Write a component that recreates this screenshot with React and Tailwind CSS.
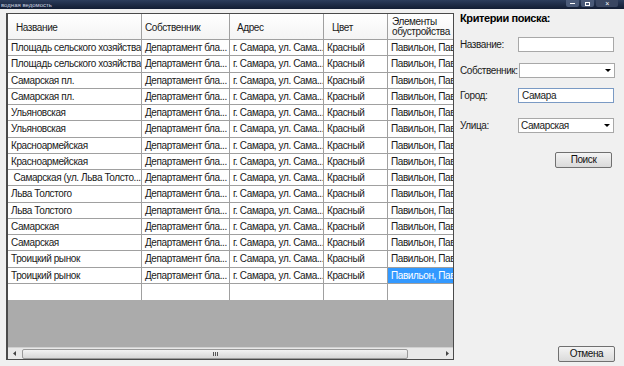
const rows = [
  'Площадь сельского хозяйства',
  'Площадь сельского хозяйства',
  'Самарская пл.',
  'Самарская пл.',
  'Ульяновская',
  'Ульяновская',
  'Красноармейская',
  'Красноармейская',
  ' Самарская (ул. Льва Толсто...',
  'Льва Толстого',
  'Льва Толстого',
  'Самарская',
  'Самарская',
  'Троицкий рынок',
  'Троицкий рынок',
]

const cols = ['w-[134px]', 'w-[88px]', 'w-[94px]', 'w-[64px]', 'w-[65px]']

function Cell({ w, children, selected, last }) {
  return (
    <div
      className={`${w} shrink-0 h-full px-[3px] flex items-center overflow-hidden whitespace-nowrap ${
        last ? '' : 'border-r border-[#a0a0a0]'
      } ${selected ? 'bg-[#3399ff] text-white' : ''}`}
    >
      {children}
    </div>
  )
}

function Select({ value }) {
  return (
    <div className="w-[96px] h-[15px] shrink-0 bg-white border border-[#a8a8a8] flex items-center justify-between pl-[2px] pr-[3px]">
      <span>{value}</span>
      <svg width="6" height="3" viewBox="0 0 6 3"><path d="M0 0h6L3 3z" fill="#000" /></svg>
    </div>
  )
}

function Button({ children }) {
  return (
    <button className="w-[57px] h-[16px] border border-[#707070] rounded-[2px] bg-gradient-to-b from-[#f4f4f4] to-[#dadada] leading-none text-[#111]">
      {children}
    </button>
  )
}

export default function App() {
  return (
    <div
      className="w-[624px] h-[366px] bg-[#f0f0f0] flex flex-col overflow-hidden text-[10px] tracking-[-0.4px] text-[#1a1a1a]"
      style={{ fontFamily: '"Liberation Sans", Arial, sans-serif' }}
    >
      {/* Title bar */}
      <div className="h-[9px] shrink-0 bg-gradient-to-b from-[#2c3d5c] to-[#121d33] flex items-center justify-between">
        <span className="text-[6px] leading-none text-[#c8d0e0] pl-[1px] tracking-normal">водная ведомость</span>
        <div className="flex gap-[2px] pr-[6px] h-full items-start">
          <div className="w-[13px] h-[7px] bg-[#4a5a78] rounded-b-[2px] flex items-center justify-center">
            <div className="w-[5px] h-[1px] bg-white" />
          </div>
          <div className="w-[13px] h-[7px] bg-[#4a5a78] rounded-b-[2px] flex items-center justify-center">
            <div className="w-[5px] h-[4px] border border-white" />
          </div>
          <div className="w-[22px] h-[7px] bg-[#3a4762] rounded-b-[2px] flex items-center justify-center text-[7px] leading-none text-white">
            ×
          </div>
        </div>
      </div>

      <div className="flex flex-1">
        {/* Grid */}
        <div className="ml-[6px] mt-[4px] w-[448px] h-[347px] shrink-0 border border-[#4a4a4a] border-l-2 bg-[#ababab] flex flex-col">
          <div className="h-[26px] shrink-0 flex bg-gradient-to-b from-white to-[#f4f4f4] border-b border-[#a0a0a0]">
            <Cell w={cols[0]}><span className="pl-[5px] pt-[2px]">Название</span></Cell>
            <Cell w={cols[1]}><span className="pt-[2px]">Собственник</span></Cell>
            <Cell w={cols[2]}><span className="pl-[4px] pt-[2px]">Адрес</span></Cell>
            <Cell w={cols[3]}><span className="pl-[5px] pt-[2px]">Цвет</span></Cell>
            <Cell w={cols[4]} last>
              <span className="leading-[10px] whitespace-nowrap pl-[1px]">
                Элементы<br />обустройства
              </span>
            </Cell>
          </div>
          {rows.map((name, i) => (
            <div key={i} className="h-[16.25px] shrink-0 flex bg-white border-b border-[#a0a0a0]">
              <Cell w={cols[0]}><span className="whitespace-pre">{name}</span></Cell>
              <Cell w={cols[1]}>Департамент бла...</Cell>
              <Cell w={cols[2]}>г. Самара, ул. Сама...</Cell>
              <Cell w={cols[3]}>Красный</Cell>
              <Cell w={cols[4]} last selected={i === rows.length - 1}>Павильон, Павильон</Cell>
            </div>
          ))}
          <div className="h-[16px] shrink-0 flex bg-white">
            <Cell w={cols[0]} />
            <Cell w={cols[1]} />
            <Cell w={cols[2]} />
            <Cell w={cols[3]} />
            <Cell w={cols[4]} last />
          </div>
          <div className="flex-1" />
          {/* Horizontal scrollbar */}
          <div className="h-[12px] shrink-0 bg-[#e8e8e8] flex items-center border-t border-[#d0d0d0]">
            <div className="w-[12px] h-full flex items-center justify-center">
              <svg width="3" height="5" viewBox="0 0 3 5"><path d="M3 0v5L0 2.5z" fill="#444" /></svg>
            </div>
            <div className="w-[386px] h-[10px] ml-[2px] rounded-[2px] border border-[#9a9a9a] bg-gradient-to-b from-[#f2f2f2] to-[#d6d6d6] flex items-center justify-center">
              <div className="flex gap-[1px]">
                <div className="w-[1px] h-[4px] bg-[#555]" />
                <div className="w-[1px] h-[4px] bg-[#555]" />
                <div className="w-[1px] h-[4px] bg-[#555]" />
              </div>
            </div>
            <div className="flex-1" />
            <div className="w-[12px] h-full flex items-center justify-center">
              <svg width="3" height="5" viewBox="0 0 3 5"><path d="M0 0v5L3 2.5z" fill="#444" /></svg>
            </div>
          </div>
        </div>

        {/* Search panel */}
        <div className="w-[170px] shrink-0 flex flex-col pl-[6px] pr-[10px]">
          <div className="mt-[3px] h-[13px] font-bold text-[11px] leading-[13px] text-black">Критерии поиска:</div>
          <div className="mt-[12px] flex items-center gap-[2px]">
            <span>Название:</span>
            <div className="ml-auto w-[96px] h-[15px] bg-white border border-[#a8a8a8]" />
          </div>
          <div className="mt-[11px] flex items-center gap-[1px]">
            <span>Собственник:</span>
            <div className="ml-auto"><Select value="" /></div>
          </div>
          <div className="mt-[10px] flex items-center gap-[2px]">
            <span>Город:</span>
            <div className="ml-auto w-[96px] h-[15px] bg-white border border-[#7a9ac4] pl-[3px] flex items-center">Самара</div>
          </div>
          <div className="mt-[15px] flex items-center gap-[2px]">
            <span>Улица:</span>
            <div className="ml-auto"><Select value="Самарская" /></div>
          </div>
          <div className="mt-[19px] flex justify-end pr-[2px]">
            <Button>Поиск</Button>
          </div>
          <div className="flex-1" />
          <div className="mb-[4px] flex justify-end mr-[-1px]">
            <Button>Отмена</Button>
          </div>
        </div>
      </div>
    </div>
  )
}
